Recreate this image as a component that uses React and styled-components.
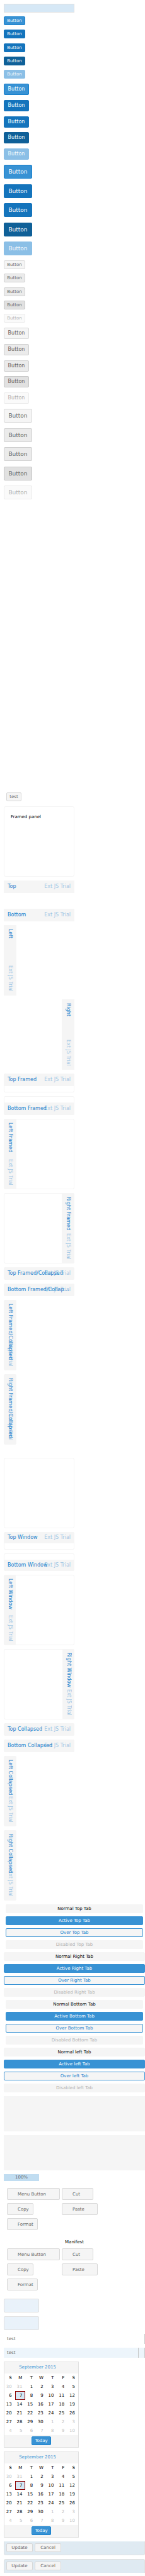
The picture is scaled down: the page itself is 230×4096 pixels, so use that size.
import React from "react";
import styled, { createGlobalStyle, css } from "styled-components";

const GlobalStyle = createGlobalStyle`
  *, *::before, *::after { box-sizing: border-box; }
  body {
    margin: 0;
    background: #fff;
    color: #000;
    font-family: "DejaVu Sans", sans-serif;
    font-size: 7px;
    line-height: 10px;
  }
  button { margin: 0; padding: 0; font-family: inherit; line-height: inherit; }
`;

const Page = styled.main`
  display: flex;
  flex-direction: column;
  padding: 6px 0 5px 6px;
`;

const FocusBar = styled.div`
  width: 112px;
  height: 14px;
  margin-bottom: 6px;
  background: #d6e8f6;
  border: 1px solid #e0e0e0;
`;

const sizes = {
  small: { width: 34, height: 14, font: 7, stack: 99 },
  medium: { width: 40, height: 18, font: 8, stack: 121 },
  large: { width: 45, height: 22, font: 9, stack: 144 },
};

const tones = {
  primary: {
    normal: ["#3892d4", "#157fcc"],
    over: ["#1474bc", "#1474bc"],
    focus: ["#1474bc", "#1474bc"],
    pressed: ["#0f6098", "#0f6098"],
    disabled: ["#8bbfe6", "#8bbfe6"],
  },
  toolbar: {
    normal: ["#f5f5f5", "#d8d8d8"],
    over: ["#ebebeb", "#cfcfcf"],
    focus: ["#ebebeb", "#cfcfcf"],
    pressed: ["#e1e1e1", "#c6c6c6"],
    disabled: ["#fafafa", "#ebebeb"],
  },
};

const textColor = (tone, state) => {
  if (tone === "primary") return state === "disabled" ? "#f3f8fc" : "#fff";
  return state === "disabled" ? "#b2b2b2" : "#666";
};

const ButtonStacks = styled.section`
  display: flex;
  flex-direction: column;
  gap: 8px;
`;

const ButtonStack = styled.div`
  display: flex;
  flex-direction: column;
  align-items: flex-start;
  justify-content: space-between;
  min-height: ${(p) => sizes[p.$size].stack}px;
`;

const Button = styled.button`
  display: flex;
  align-items: center;
  justify-content: center;
  width: ${(p) => p.$width || sizes[p.$size].width}px;
  height: ${(p) => sizes[p.$size].height}px;
  font-size: ${(p) => sizes[p.$size].font}px;
  white-space: nowrap;
  border-radius: 2px;
  color: ${(p) => textColor(p.$tone, p.$state)};
  background: ${(p) => tones[p.$tone][p.$state][0]};
  border: 1px solid ${(p) => tones[p.$tone][p.$state][1]};
`;

const TestArea = styled.section`
  padding: 466px 0 8px 4px;
`;

const Panels = styled.section`
  display: flex;
  flex-direction: column;
  gap: 6px;
  width: 112px;
  margin-bottom: ${(p) => p.$after}px;
`;

const Frame = styled.div`
  height: 112px;
  padding: 11px 10px;
  border: 1px solid #f5f5f5;
  border-radius: 3px;
`;

const directions = {
  top: "column",
  bottom: "column-reverse",
  left: "row",
  right: "row-reverse",
};

const isSide = (dock) => dock === "left" || dock === "right";

const PanelBox = styled.article`
  display: flex;
  flex-direction: ${(p) => directions[p.$dock]};
  align-self: ${(p) => (p.$collapsed && isSide(p.$dock) ? "flex-start" : "stretch")};
  overflow: hidden;
  ${(p) => isSide(p.$dock) && css`height: 112px;`}
  ${(p) => p.$framed && css`
    border-radius: 3px;
    box-shadow: inset 0 0 0 1px #f5f5f5;
  `}
`;

const PanelHeader = styled.header`
  display: grid;
  align-items: center;
  flex: none;
  background: #f5f5f5;
  color: #157fcc;
  font-size: 8px;
  white-space: nowrap;
  grid-template-columns: minmax(0, 1fr);
  ${(p) => isSide(p.$dock)
    ? css`
        writing-mode: vertical-rl;
        width: ${p.$size}px;
        padding: 6px 0;
      `
    : css`
        height: ${p.$size}px;
        padding: 0 6px;
      `}
`;

const PanelTitle = styled.span`
  grid-area: 1 / 1;
  overflow: hidden;
  text-overflow: ellipsis;
`;

const TrialMark = styled.span`
  grid-area: 1 / 1;
  justify-self: end;
  opacity: 0.4;
`;

const PanelBody = styled.div`
  flex: 1;
  min-height: ${(p) => p.$height}px;
`;

const TabList = styled.div`
  display: flex;
  flex-direction: column;
  gap: 5px;
  margin-bottom: 6px;
`;

const tabLooks = {
  Normal: ["#f5f5f5", "#f5f5f5", "#000"],
  Active: ["#3892d4", "#3892d4", "#fff"],
  Over: ["#f5f5f5", "#3892d4", "#157fcc"],
  Disabled: ["#f5f5f5", "#f5f5f5", "#b2b2b2"],
};

const Tab = styled.button`
  height: 14px;
  margin: 0 ${(p) => (p.$inset ? 3 : 0)}px;
  font-size: 7px;
  text-align: center;
  border-radius: 2px;
  background: ${(p) => tabLooks[p.$look][0]};
  border: 1px solid ${(p) => tabLooks[p.$look][1]};
  color: ${(p) => tabLooks[p.$look][2]};
`;

const Strip = styled.div`
  height: 56px;
  margin-bottom: 6px;
  background: #f5f5f5;
`;

const Progress = styled.div`
  width: 56px;
  height: 11px;
  color: #666;
  text-align: center;
  background: #c1ddf1;
`;

const Group = styled.section`
  padding: 0 5px;
`;

const GroupTitle = styled.h2`
  margin: 0;
  padding: 14px 0 5px;
  font-size: 7px;
  font-weight: 400;
  text-align: center;
`;

const GroupGrid = styled.div`
  display: grid;
  grid-template-columns: 84px 1fr;
  gap: 5px 3px;
  justify-items: start;
  padding-top: ${(p) => p.$top}px;
`;

const GroupButton = styled.button`
  width: ${(p) => p.$width}px;
  height: 19px;
  padding-left: 16px;
  font-size: 7px;
  text-align: left;
  white-space: nowrap;
  color: #666;
  background: #f5f5f5;
  border: 1px solid #d8d8d8;
  border-radius: 2px;
`;

const Tips = styled.section`
  display: flex;
  flex-direction: column;
  gap: 6px;
  padding: 13px 0 6px;
`;

const Tip = styled.div`
  width: 56px;
  height: 22px;
  background: #e9f2fa;
  border: 1px solid #e0e0e0;
  border-radius: 2px;
`;

const Column = styled.div`
  display: flex;
  align-items: stretch;
  height: 16px;
  margin-bottom: 6px;
  color: #666;
  background: ${(p) => (p.$over ? "#edf5fb" : "#fff")};
  border-right: 1px solid #c8c8c8;
`;

const ColumnText = styled.span`
  flex: 1;
  padding: 3px 5px;
`;

const ColumnTrigger = styled.span`
  width: 10px;
  border-left: 1px solid #c8c8c8;
`;

const Calendar = styled.section`
  width: 119px;
  margin-bottom: 6px;
  border: 1px solid #e1e1e1;
`;

const MonthBar = styled.div`
  display: flex;
  justify-content: center;
  height: 18px;
  padding: 3px 12px 0 0;
  background: #f5f5f5;
`;

const MonthButton = styled.button`
  height: 10px;
  font-size: 7px;
  color: #3892d4;
  background: none;
  border: 0;
`;

const Days = styled.table`
  width: 100%;
  table-layout: fixed;
  border-collapse: collapse;
  th, td {
    height: 14px;
    padding: 0 5px 0 0;
    font-weight: 400;
    text-align: right;
  }
`;

const Day = styled.td`
  color: ${(p) => (p.$outside ? "#bfbfbf" : "#000")};
  ${(p) => p.$selected && css`
    background: #d6e8f6;
    box-shadow: inset 0 0 0 1px #8b0000;
  `}
`;

const CalendarFooter = styled.div`
  display: flex;
  justify-content: center;
  height: 19px;
  padding-top: 2px;
  background: #f5f5f5;
`;

const EditorBar = styled.div`
  display: flex;
  gap: 3px;
  height: 22px;
  padding: 3px;
  background: #dfeaf2;
  border: solid #e1e1e1;
  ${(p) => p.$side === "bottom"
    ? css`border-width: 0 1px 1px; border-radius: 0 0 3px 3px; margin-bottom: 6px;`
    : css`border-width: 1px 1px 0; border-radius: 3px 3px 0 0;`}
`;

const states = ["normal", "over", "focus", "pressed", "disabled"];
const sizeNames = ["small", "medium", "large"];

function Panel({ title, dock, framed, collapsed, header = 20, body = 10 }) {
  return (
    <PanelBox $dock={dock} $framed={framed} $collapsed={collapsed}>
      <PanelHeader $dock={dock} $size={header}>
        <PanelTitle>{title}</PanelTitle>
        <TrialMark>Ext JS Trial</TrialMark>
      </PanelHeader>
      {!collapsed && <PanelBody $height={isSide(dock) ? 0 : body} />}
    </PanelBox>
  );
}

function ButtonGroup({ title }) {
  return (
    <Group>
      {title && <GroupTitle>{title}</GroupTitle>}
      <GroupGrid $top={title ? 0 : 11}>
        <GroupButton $width={84}>Menu Button</GroupButton>
        <GroupButton $width={50}>Cut</GroupButton>
        <GroupButton $width={42}>Copy</GroupButton>
        <GroupButton $width={57}>Paste</GroupButton>
        <GroupButton $width={49}>Format</GroupButton>
      </GroupGrid>
    </Group>
  );
}

const weekdays = ["S", "M", "T", "W", "T", "F", "S"];
const weeks = Array.from({ length: 6 }, (_, w) =>
  Array.from({ length: 7 }, (_, d) => {
    const n = w * 7 + d - 1;
    if (n < 1) return { label: n + 31, outside: true };
    if (n > 30) return { label: n - 30, outside: true };
    return { label: n, outside: false };
  })
);

function DatePicker() {
  return (
    <Calendar>
      <MonthBar>
        <MonthButton>September 2015</MonthButton>
      </MonthBar>
      <Days>
        <thead>
          <tr>{weekdays.map((d, i) => <th key={i} scope="col">{d}</th>)}</tr>
        </thead>
        <tbody>
          {weeks.map((week, w) => (
            <tr key={w}>
              {week.map((day, d) => (
                <Day key={d} $outside={day.outside} $selected={!day.outside && day.label === 7}>
                  {day.label}
                </Day>
              ))}
            </tr>
          ))}
        </tbody>
      </Days>
      <CalendarFooter>
        <Button $tone="primary" $state="normal" $size="small" $width={31}>Today</Button>
      </CalendarFooter>
    </Calendar>
  );
}

function RowEditor({ side }) {
  return (
    <EditorBar $side={side}>
      <Button $tone="toolbar" $state="normal" $size="small" $width={42}>Update</Button>
      <Button $tone="toolbar" $state="normal" $size="small" $width={42}>Cancel</Button>
    </EditorBar>
  );
}

export default function App() {
  return (
    <>
      <GlobalStyle />
      <Page>
        <FocusBar />
        <ButtonStacks>
          {Object.keys(tones).map((tone) =>
            sizeNames.map((size) => (
              <ButtonStack key={tone + size} $size={size}>
                {states.map((state) => (
                  <Button key={state} $tone={tone} $state={state} $size={size} disabled={state === "disabled"}>
                    Button
                  </Button>
                ))}
              </ButtonStack>
            ))
          )}
        </ButtonStacks>
        <TestArea>
          <Button $tone="toolbar" $state="normal" $size="small" $width={24}>test</Button>
        </TestArea>
        <Panels $after={21}>
          <Frame>Framed panel</Frame>
          <Panel title="Top" dock="top" />
          <Panel title="Bottom" dock="bottom" body={9} />
          <Panel title="Left" dock="left" />
          <Panel title="Right" dock="right" />
          <Panel title="Top Framed" dock="top" framed />
          <Panel title="Bottom Framed" dock="bottom" framed />
          <Panel title="Left Framed" dock="left" framed />
          <Panel title="Right Framed" dock="right" framed />
          <Panel title="Top Framed/Collapsed" dock="top" framed collapsed />
          <Panel title="Bottom Framed/Collapsed" dock="bottom" framed collapsed />
          <Panel title="Left Framed/Collapsed" dock="left" framed collapsed />
          <Panel title="Right Framed/Collapsed" dock="right" framed collapsed />
        </Panels>
        <Panels $after={6}>
          <Frame />
          <Panel title="Top Window" dock="top" framed header={18} />
          <Panel title="Bottom Window" dock="bottom" framed header={18} />
          <Panel title="Left Window" dock="left" framed header={19} />
          <Panel title="Right Window" dock="right" framed header={19} />
          <Panel title="Top Collapsed" dock="top" framed collapsed />
          <Panel title="Bottom Collapsed" dock="bottom" framed collapsed />
          <Panel title="Left Collapsed" dock="left" framed collapsed />
          <Panel title="Right Collapsed" dock="right" framed collapsed />
        </Panels>
        <TabList role="tablist">
          {["Top", "Right", "Bottom", "left"].map((side) =>
            Object.keys(tabLooks).map((look) => (
              <Tab
                key={side + look}
                role="tab"
                aria-selected={look === "Active"}
                disabled={look === "Disabled"}
                $look={look}
                $inset={side === "Top" || side === "Bottom"}
              >
                {look} {side} Tab
              </Tab>
            ))
          )}
        </TabList>
        <Strip />
        <Strip />
        <Progress role="progressbar" aria-valuenow={100}>100%</Progress>
        <ButtonGroup />
        <ButtonGroup title="Manifest" />
        <Tips>
          <Tip />
          <Tip />
        </Tips>
        <Column>
          <ColumnText>test</ColumnText>
        </Column>
        <Column $over>
          <ColumnText>test</ColumnText>
          <ColumnTrigger />
        </Column>
        <DatePicker />
        <DatePicker />
        <RowEditor side="bottom" />
        <RowEditor side="top" />
      </Page>
    </>
  );
}
